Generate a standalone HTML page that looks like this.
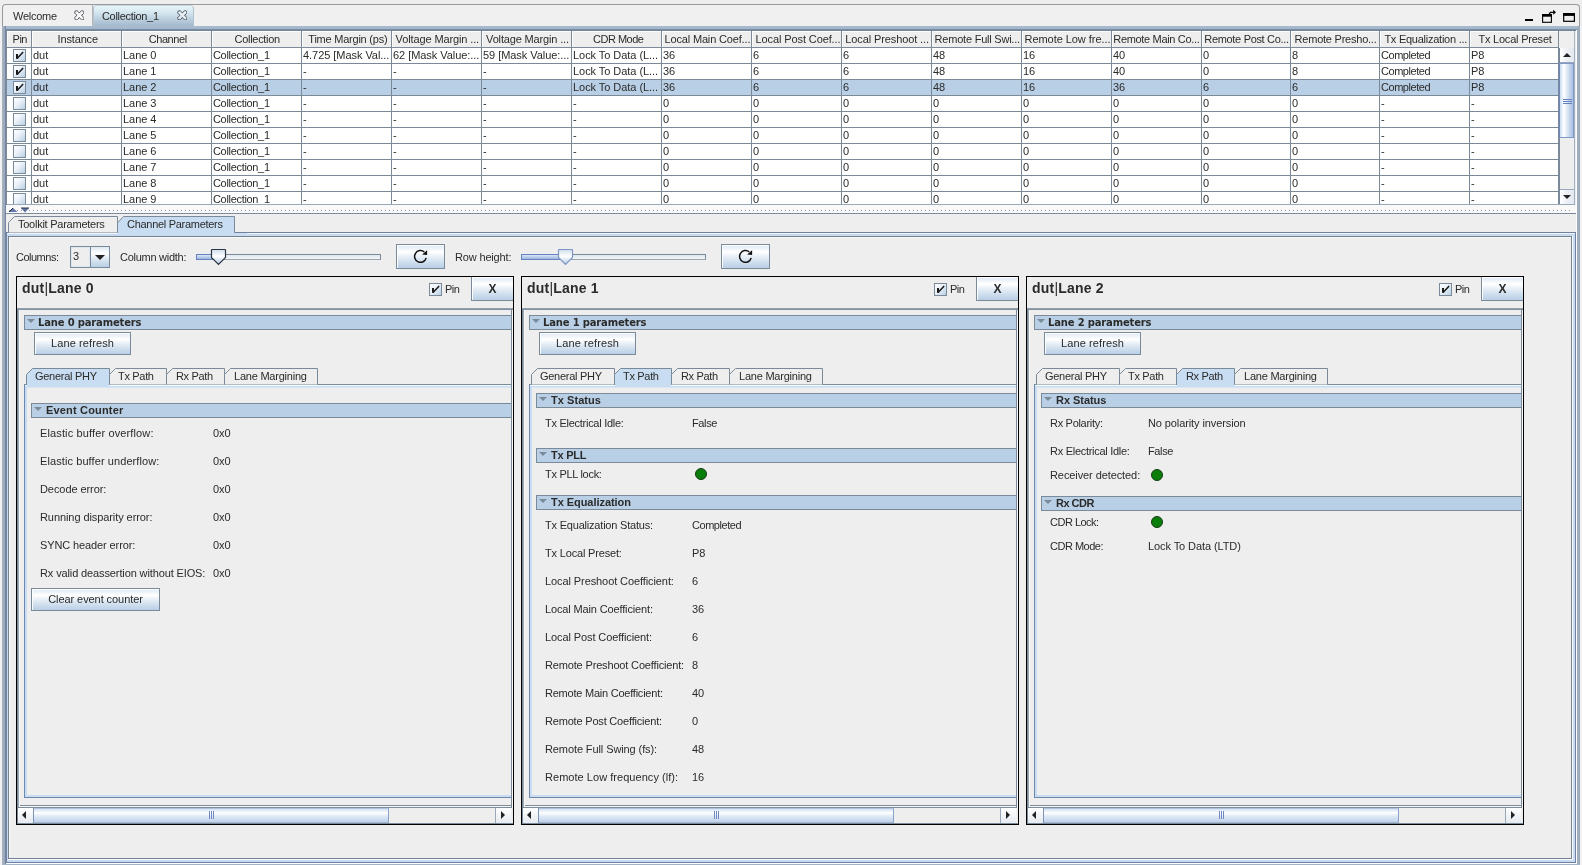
<!DOCTYPE html>
<html><head><meta charset="utf-8"><title>Collection_1</title><style>
*{box-sizing:border-box;margin:0;padding:0}
html,body{width:1582px;height:865px;overflow:hidden;background:#eee}
body{will-change:transform;position:relative;font-family:"Liberation Sans",sans-serif;font-size:11px;color:#2b2b2b;letter-spacing:-0.15px;line-height:13px}
.a{position:absolute}
.t{position:absolute;white-space:nowrap}
.b{font-weight:bold}
.btn{position:absolute;border:1px solid #7a8a99;box-shadow:inset 1px 1px 0 rgba(255,255,255,.9);background:linear-gradient(#dde8f3 0%,#fff 30%,#dde8f3 60%,#b8cfe5 100%);text-align:center;white-space:nowrap}
.hdr{letter-spacing:-0.05px;position:absolute;top:31px;height:16px;background:#eee;box-shadow:inset 1px 1px 0 #fdfdfd;border-right:1px solid #7a8a99;line-height:17px;white-space:nowrap;overflow:hidden}
.hdr.l{text-align:left;padding-left:3px}
.row{position:absolute;left:7px;width:1552px;height:16px;border-bottom:1px solid #7a8a99;background:#fff}
.row.sel{background:#b8cfe5}
.c{letter-spacing:-0.05px;position:absolute;top:0;height:15px;line-height:15px;border-right:1px solid #7a8a99;padding-left:1px;white-space:nowrap;overflow:hidden}
.cb{position:absolute;width:13px;height:13px;border:1px solid #7a8a99;background:linear-gradient(135deg,#fff 0%,#eaf1f8 45%,#b8cfe5 100%)}
.sec{position:absolute;height:15px;border:1px solid #7a8a99;border-right:0;background:#b8cfe5}
.sec i{position:absolute;left:2px;top:3px;width:0;height:0;border-left:4px solid transparent;border-right:4px solid transparent;border-top:4px solid #7a8a99}
.sec b{position:absolute;top:0;line-height:13px;white-space:nowrap;letter-spacing:0.15px}
.sec b.dv{font-family:"DejaVu Sans","Liberation Sans",sans-serif;font-size:10px;letter-spacing:-0.17px}
.led{position:absolute;width:12px;height:12px;border-radius:50%;background:#0b7d0b;border:1px solid #143d14}
.panel{position:absolute;top:276px;height:549px;border:1px solid #000}
</style></head><body>
<div class="a" style="left:2px;top:4px;width:1578px;height:22px;border:1px solid #9a9a9a;border-bottom:0;border-radius:4px 4px 0 0;background:#f0f0f0"></div>
<div class="a" style="left:92px;top:5px;width:1px;height:21px;background:#b4b4b4"></div>
<div class="t" style="left:13px;top:10px;letter-spacing:-0.25px;">Welcome</div>
<div class="a" style="left:93px;top:5px;width:101px;height:22px;border-radius:4px 4px 0 0;border:1px solid #b4c3d1;border-bottom:0;border-top-color:#c9d6df;background:linear-gradient(#e8f6fa 0%,#d2e4ed 35%,#b9cddc 65%,#a0b6cb 100%)"></div>
<div class="t" style="left:102px;top:10px;letter-spacing:-0.32px;">Collection_1</div>
<svg class="a" style="left:73.7px;top:9.6px" width="10.6" height="10.6" viewBox="0 0 12 12"><path d="M2.2 0.9 L3.3 0.9 Q4 0.9 4.4 1.5 L6 3.5 L7.6 1.5 Q8 0.9 8.7 0.9 L9.8 0.9 Q11.1 0.9 11.1 2.2 L11.1 3.3 Q11.1 4 10.5 4.4 L8.5 6 L10.5 7.6 Q11.1 8 11.1 8.7 L11.1 9.8 Q11.1 11.1 9.8 11.1 L8.7 11.1 Q8 11.1 7.6 10.5 L6 8.5 L4.4 10.5 Q4 11.1 3.3 11.1 L2.2 11.1 Q0.9 11.1 0.9 9.8 L0.9 8.7 Q0.9 8 1.5 7.6 L3.5 6 L1.5 4.4 Q0.9 4 0.9 3.3 L0.9 2.2 Q0.9 0.9 2.2 0.9 Z" fill="rgba(255,255,255,.45)" stroke="#3a4048" stroke-width="0.95"/></svg>
<svg class="a" style="left:176.6px;top:9.8px" width="10.6" height="10.6" viewBox="0 0 12 12"><path d="M2.2 0.9 L3.3 0.9 Q4 0.9 4.4 1.5 L6 3.5 L7.6 1.5 Q8 0.9 8.7 0.9 L9.8 0.9 Q11.1 0.9 11.1 2.2 L11.1 3.3 Q11.1 4 10.5 4.4 L8.5 6 L10.5 7.6 Q11.1 8 11.1 8.7 L11.1 9.8 Q11.1 11.1 9.8 11.1 L8.7 11.1 Q8 11.1 7.6 10.5 L6 8.5 L4.4 10.5 Q4 11.1 3.3 11.1 L2.2 11.1 Q0.9 11.1 0.9 9.8 L0.9 8.7 Q0.9 8 1.5 7.6 L3.5 6 L1.5 4.4 Q0.9 4 0.9 3.3 L0.9 2.2 Q0.9 0.9 2.2 0.9 Z" fill="rgba(255,255,255,.45)" stroke="#3a4048" stroke-width="0.95"/></svg>
<div class="a" style="left:1525px;top:19px;width:8px;height:2px;background:#000"></div>
<svg class="a" style="left:1541px;top:9px" width="18" height="16" viewBox="0 0 18 16"><rect x="1.6" y="5.6" width="8.8" height="7.7" fill="none" stroke="#000" stroke-width="1.1"/><rect x="1.1" y="5.1" width="9.8" height="2.6" fill="#000"/><path d="M8.1 5.3 L9.4 3.4 L12.4 3.4" fill="none" stroke="#000" stroke-width="1.3"/><path d="M12.2 0.8 L15 3.3 L12.2 5.8 Z" fill="#000"/></svg>
<svg class="a" style="left:1562px;top:12px" width="14" height="11" viewBox="0 0 14 11"><rect x="1.7" y="1.7" width="10.7" height="7.6" fill="none" stroke="#000" stroke-width="1.2"/><rect x="1.1" y="1.1" width="11.9" height="2.8" fill="#000"/></svg>
<div class="a" style="left:0;top:26px;width:1582px;height:839px;background:#f2f2f4"></div>
<div class="a" style="left:5px;top:26px;width:1572px;height:838px;background:#eee"></div>
<div class="a" style="left:2px;top:26px;width:1578px;height:5px;background:linear-gradient(#a9bbcf 0%,#a3b6cb 58%,#7b8da1 62%,#748699 100%)"></div>
<div class="a" style="left:2px;top:26px;width:3px;height:839px;background:linear-gradient(90deg,#a9b4c2,#9ba7b6)"></div>
<div class="a" style="left:5px;top:26px;width:1px;height:839px;background:#7585a3"></div>
<div class="a" style="left:6px;top:30px;width:1px;height:175px;background:#7a8a99"></div>
<div class="a" style="left:1576px;top:30px;width:1px;height:835px;background:#fafcfd"></div>
<div class="a" style="left:1577px;top:26px;width:3px;height:839px;background:linear-gradient(90deg,#a6b1be,#9ca8b6)"></div>
<div class="a" style="left:6px;top:863px;width:1571px;height:1px;background:#fafcfd"></div>
<div class="a" style="left:2px;top:864px;width:1578px;height:1px;background:#a3b2c4"></div>
<div class="a" style="left:7px;top:31px;width:1568px;height:173px;background:#eee"></div>
<div class="hdr" style="left:7px;width:25px"><span style="position:absolute;left:5.6px;top:0;letter-spacing:-0.50px">Pin</span></div>
<div class="hdr" style="left:32px;width:90px"><span style="position:absolute;left:25.6px;top:0;letter-spacing:-0.16px">Instance</span></div>
<div class="hdr" style="left:122px;width:90px"><span style="position:absolute;left:26.7px;top:0;letter-spacing:-0.43px">Channel</span></div>
<div class="hdr" style="left:212px;width:90px"><span style="position:absolute;left:22.6px;top:0;letter-spacing:-0.30px">Collection</span></div>
<div class="hdr" style="left:302px;width:90px"><span style="position:absolute;left:6.3px;top:0;letter-spacing:-0.23px">Time Margin (ps)</span></div>
<div class="hdr" style="left:392px;width:90px"><span style="position:absolute;left:3.6px;top:0;letter-spacing:-0.12px">Voltage Margin ...</span></div>
<div class="hdr" style="left:482px;width:90px"><span style="position:absolute;left:4.1px;top:0;letter-spacing:-0.16px">Voltage Margin ...</span></div>
<div class="hdr" style="left:572px;width:90px"><span style="position:absolute;left:21.0px;top:0;letter-spacing:-0.50px">CDR Mode</span></div>
<div class="hdr" style="left:662px;width:90px"><span style="position:absolute;left:2.5px;top:0;letter-spacing:-0.16px">Local Main Coef...</span></div>
<div class="hdr" style="left:752px;width:90px"><span style="position:absolute;left:3.6px;top:0;letter-spacing:-0.11px">Local Post Coef...</span></div>
<div class="hdr" style="left:842px;width:90px"><span style="position:absolute;left:3.3px;top:0;letter-spacing:-0.11px">Local Preshoot ...</span></div>
<div class="hdr" style="left:932px;width:90px"><span style="position:absolute;left:2.6px;top:0;letter-spacing:-0.22px">Remote Full Swi...</span></div>
<div class="hdr" style="left:1022px;width:90px"><span style="position:absolute;left:2.5px;top:0;letter-spacing:-0.05px">Remote Low fre...</span></div>
<div class="hdr" style="left:1112px;width:90px"><span style="position:absolute;left:1.3px;top:0;letter-spacing:-0.33px">Remote Main Co...</span></div>
<div class="hdr" style="left:1202px;width:89px"><span style="position:absolute;left:2.3px;top:0;letter-spacing:-0.32px">Remote Post Co...</span></div>
<div class="hdr" style="left:1291px;width:89px"><span style="position:absolute;left:3.6px;top:0;letter-spacing:-0.23px">Remote Presho...</span></div>
<div class="hdr" style="left:1380px;width:90px"><span style="position:absolute;left:4.4px;top:0;letter-spacing:-0.25px">Tx Equalization ...</span></div>
<div class="hdr" style="left:1470px;width:89px"><span style="position:absolute;left:8.4px;top:0;letter-spacing:-0.21px">Tx Local Preset</span></div>
<div class="a" style="left:7px;top:47px;width:1552px;height:1px;background:#7a8a99"></div>
<div class="a" style="left:1559px;top:31px;width:16px;height:17px;background:#efefef;border-right:1px solid #a9b5c3"></div>
<div class="a" style="left:0;top:48px;width:1582px;height:156px;overflow:hidden">
<div class="row" style="top:0px"><div class="c" style="left:0;width:25px"><div class="cb" style="left:6px;top:1px"><svg class="a" style="left:0;top:0" width="11" height="11" viewBox="0 0 11 11"><rect x="2" y="4" width="2" height="4.8" fill="#1a1a1a"/><path d="M3.5 8.1 L8.7 2.4" stroke="#1a1a1a" stroke-width="1.5" stroke-linecap="round" fill="none"/></svg></div></div><div class="c" style="left:25px;width:90px;">dut</div><div class="c" style="left:115px;width:90px;">Lane 0</div><div class="c" style="left:205px;width:90px;letter-spacing:-0.32px;">Collection_1</div><div class="c" style="left:295px;width:90px;">4.725 [Mask Val...</div><div class="c" style="left:385px;width:90px;">62 [Mask Value:...</div><div class="c" style="left:475px;width:90px;">59 [Mask Value:...</div><div class="c" style="left:565px;width:90px;">Lock To Data (L...</div><div class="c" style="left:655px;width:90px;">36</div><div class="c" style="left:745px;width:90px;">6</div><div class="c" style="left:835px;width:90px;">6</div><div class="c" style="left:925px;width:90px;">48</div><div class="c" style="left:1015px;width:90px;">16</div><div class="c" style="left:1105px;width:90px;">40</div><div class="c" style="left:1195px;width:89px;">0</div><div class="c" style="left:1284px;width:89px;">8</div><div class="c" style="left:1373px;width:90px;letter-spacing:-0.46px;">Completed</div><div class="c" style="left:1463px;width:89px;">P8</div></div>
<div class="row" style="top:16px"><div class="c" style="left:0;width:25px"><div class="cb" style="left:6px;top:1px"><svg class="a" style="left:0;top:0" width="11" height="11" viewBox="0 0 11 11"><rect x="2" y="4" width="2" height="4.8" fill="#1a1a1a"/><path d="M3.5 8.1 L8.7 2.4" stroke="#1a1a1a" stroke-width="1.5" stroke-linecap="round" fill="none"/></svg></div></div><div class="c" style="left:25px;width:90px;">dut</div><div class="c" style="left:115px;width:90px;">Lane 1</div><div class="c" style="left:205px;width:90px;letter-spacing:-0.32px;">Collection_1</div><div class="c" style="left:295px;width:90px;">-</div><div class="c" style="left:385px;width:90px;">-</div><div class="c" style="left:475px;width:90px;">-</div><div class="c" style="left:565px;width:90px;">Lock To Data (L...</div><div class="c" style="left:655px;width:90px;">36</div><div class="c" style="left:745px;width:90px;">6</div><div class="c" style="left:835px;width:90px;">6</div><div class="c" style="left:925px;width:90px;">48</div><div class="c" style="left:1015px;width:90px;">16</div><div class="c" style="left:1105px;width:90px;">40</div><div class="c" style="left:1195px;width:89px;">0</div><div class="c" style="left:1284px;width:89px;">8</div><div class="c" style="left:1373px;width:90px;letter-spacing:-0.46px;">Completed</div><div class="c" style="left:1463px;width:89px;">P8</div></div>
<div class="row sel" style="top:32px"><div class="c" style="left:0;width:25px"><div class="cb" style="left:6px;top:1px"><svg class="a" style="left:0;top:0" width="11" height="11" viewBox="0 0 11 11"><rect x="2" y="4" width="2" height="4.8" fill="#1a1a1a"/><path d="M3.5 8.1 L8.7 2.4" stroke="#1a1a1a" stroke-width="1.5" stroke-linecap="round" fill="none"/></svg></div></div><div class="c" style="left:25px;width:90px;">dut</div><div class="c" style="left:115px;width:90px;">Lane 2</div><div class="c" style="left:205px;width:90px;letter-spacing:-0.32px;">Collection_1</div><div class="c" style="left:295px;width:90px;">-</div><div class="c" style="left:385px;width:90px;">-</div><div class="c" style="left:475px;width:90px;">-</div><div class="c" style="left:565px;width:90px;">Lock To Data (L...</div><div class="c" style="left:655px;width:90px;">36</div><div class="c" style="left:745px;width:90px;">6</div><div class="c" style="left:835px;width:90px;">6</div><div class="c" style="left:925px;width:90px;">48</div><div class="c" style="left:1015px;width:90px;">16</div><div class="c" style="left:1105px;width:90px;">36</div><div class="c" style="left:1195px;width:89px;">6</div><div class="c" style="left:1284px;width:89px;">6</div><div class="c" style="left:1373px;width:90px;letter-spacing:-0.46px;">Completed</div><div class="c" style="left:1463px;width:89px;">P8</div></div>
<div class="row" style="top:48px"><div class="c" style="left:0;width:25px"><div class="cb" style="left:6px;top:1px"></div></div><div class="c" style="left:25px;width:90px;">dut</div><div class="c" style="left:115px;width:90px;">Lane 3</div><div class="c" style="left:205px;width:90px;letter-spacing:-0.32px;">Collection_1</div><div class="c" style="left:295px;width:90px;">-</div><div class="c" style="left:385px;width:90px;">-</div><div class="c" style="left:475px;width:90px;">-</div><div class="c" style="left:565px;width:90px;">-</div><div class="c" style="left:655px;width:90px;">0</div><div class="c" style="left:745px;width:90px;">0</div><div class="c" style="left:835px;width:90px;">0</div><div class="c" style="left:925px;width:90px;">0</div><div class="c" style="left:1015px;width:90px;">0</div><div class="c" style="left:1105px;width:90px;">0</div><div class="c" style="left:1195px;width:89px;">0</div><div class="c" style="left:1284px;width:89px;">0</div><div class="c" style="left:1373px;width:90px;">-</div><div class="c" style="left:1463px;width:89px;">-</div></div>
<div class="row" style="top:64px"><div class="c" style="left:0;width:25px"><div class="cb" style="left:6px;top:1px"></div></div><div class="c" style="left:25px;width:90px;">dut</div><div class="c" style="left:115px;width:90px;">Lane 4</div><div class="c" style="left:205px;width:90px;letter-spacing:-0.32px;">Collection_1</div><div class="c" style="left:295px;width:90px;">-</div><div class="c" style="left:385px;width:90px;">-</div><div class="c" style="left:475px;width:90px;">-</div><div class="c" style="left:565px;width:90px;">-</div><div class="c" style="left:655px;width:90px;">0</div><div class="c" style="left:745px;width:90px;">0</div><div class="c" style="left:835px;width:90px;">0</div><div class="c" style="left:925px;width:90px;">0</div><div class="c" style="left:1015px;width:90px;">0</div><div class="c" style="left:1105px;width:90px;">0</div><div class="c" style="left:1195px;width:89px;">0</div><div class="c" style="left:1284px;width:89px;">0</div><div class="c" style="left:1373px;width:90px;">-</div><div class="c" style="left:1463px;width:89px;">-</div></div>
<div class="row" style="top:80px"><div class="c" style="left:0;width:25px"><div class="cb" style="left:6px;top:1px"></div></div><div class="c" style="left:25px;width:90px;">dut</div><div class="c" style="left:115px;width:90px;">Lane 5</div><div class="c" style="left:205px;width:90px;letter-spacing:-0.32px;">Collection_1</div><div class="c" style="left:295px;width:90px;">-</div><div class="c" style="left:385px;width:90px;">-</div><div class="c" style="left:475px;width:90px;">-</div><div class="c" style="left:565px;width:90px;">-</div><div class="c" style="left:655px;width:90px;">0</div><div class="c" style="left:745px;width:90px;">0</div><div class="c" style="left:835px;width:90px;">0</div><div class="c" style="left:925px;width:90px;">0</div><div class="c" style="left:1015px;width:90px;">0</div><div class="c" style="left:1105px;width:90px;">0</div><div class="c" style="left:1195px;width:89px;">0</div><div class="c" style="left:1284px;width:89px;">0</div><div class="c" style="left:1373px;width:90px;">-</div><div class="c" style="left:1463px;width:89px;">-</div></div>
<div class="row" style="top:96px"><div class="c" style="left:0;width:25px"><div class="cb" style="left:6px;top:1px"></div></div><div class="c" style="left:25px;width:90px;">dut</div><div class="c" style="left:115px;width:90px;">Lane 6</div><div class="c" style="left:205px;width:90px;letter-spacing:-0.32px;">Collection_1</div><div class="c" style="left:295px;width:90px;">-</div><div class="c" style="left:385px;width:90px;">-</div><div class="c" style="left:475px;width:90px;">-</div><div class="c" style="left:565px;width:90px;">-</div><div class="c" style="left:655px;width:90px;">0</div><div class="c" style="left:745px;width:90px;">0</div><div class="c" style="left:835px;width:90px;">0</div><div class="c" style="left:925px;width:90px;">0</div><div class="c" style="left:1015px;width:90px;">0</div><div class="c" style="left:1105px;width:90px;">0</div><div class="c" style="left:1195px;width:89px;">0</div><div class="c" style="left:1284px;width:89px;">0</div><div class="c" style="left:1373px;width:90px;">-</div><div class="c" style="left:1463px;width:89px;">-</div></div>
<div class="row" style="top:112px"><div class="c" style="left:0;width:25px"><div class="cb" style="left:6px;top:1px"></div></div><div class="c" style="left:25px;width:90px;">dut</div><div class="c" style="left:115px;width:90px;">Lane 7</div><div class="c" style="left:205px;width:90px;letter-spacing:-0.32px;">Collection_1</div><div class="c" style="left:295px;width:90px;">-</div><div class="c" style="left:385px;width:90px;">-</div><div class="c" style="left:475px;width:90px;">-</div><div class="c" style="left:565px;width:90px;">-</div><div class="c" style="left:655px;width:90px;">0</div><div class="c" style="left:745px;width:90px;">0</div><div class="c" style="left:835px;width:90px;">0</div><div class="c" style="left:925px;width:90px;">0</div><div class="c" style="left:1015px;width:90px;">0</div><div class="c" style="left:1105px;width:90px;">0</div><div class="c" style="left:1195px;width:89px;">0</div><div class="c" style="left:1284px;width:89px;">0</div><div class="c" style="left:1373px;width:90px;">-</div><div class="c" style="left:1463px;width:89px;">-</div></div>
<div class="row" style="top:128px"><div class="c" style="left:0;width:25px"><div class="cb" style="left:6px;top:1px"></div></div><div class="c" style="left:25px;width:90px;">dut</div><div class="c" style="left:115px;width:90px;">Lane 8</div><div class="c" style="left:205px;width:90px;letter-spacing:-0.32px;">Collection_1</div><div class="c" style="left:295px;width:90px;">-</div><div class="c" style="left:385px;width:90px;">-</div><div class="c" style="left:475px;width:90px;">-</div><div class="c" style="left:565px;width:90px;">-</div><div class="c" style="left:655px;width:90px;">0</div><div class="c" style="left:745px;width:90px;">0</div><div class="c" style="left:835px;width:90px;">0</div><div class="c" style="left:925px;width:90px;">0</div><div class="c" style="left:1015px;width:90px;">0</div><div class="c" style="left:1105px;width:90px;">0</div><div class="c" style="left:1195px;width:89px;">0</div><div class="c" style="left:1284px;width:89px;">0</div><div class="c" style="left:1373px;width:90px;">-</div><div class="c" style="left:1463px;width:89px;">-</div></div>
<div class="row" style="top:144px"><div class="c" style="left:0;width:25px"><div class="cb" style="left:6px;top:1px"></div></div><div class="c" style="left:25px;width:90px;">dut</div><div class="c" style="left:115px;width:90px;">Lane 9</div><div class="c" style="left:205px;width:90px;letter-spacing:-0.32px;">Collection_1</div><div class="c" style="left:295px;width:90px;">-</div><div class="c" style="left:385px;width:90px;">-</div><div class="c" style="left:475px;width:90px;">-</div><div class="c" style="left:565px;width:90px;">-</div><div class="c" style="left:655px;width:90px;">0</div><div class="c" style="left:745px;width:90px;">0</div><div class="c" style="left:835px;width:90px;">0</div><div class="c" style="left:925px;width:90px;">0</div><div class="c" style="left:1015px;width:90px;">0</div><div class="c" style="left:1105px;width:90px;">0</div><div class="c" style="left:1195px;width:89px;">0</div><div class="c" style="left:1284px;width:89px;">0</div><div class="c" style="left:1373px;width:90px;">-</div><div class="c" style="left:1463px;width:89px;">-</div></div>
</div>
<div class="a" style="left:1559px;top:48px;width:16px;height:156px;background:#eee;border-left:1px solid #7a8a99;border-right:1px solid #9fb0c3"></div>
<div class="a" style="left:1560px;top:48px;width:14px;height:15px;background:linear-gradient(90deg,#fff,#eef2f7 40%,#e3e9f0);border-bottom:1px solid #9aa9ba"></div>
<div class="a" style="left:1563px;top:53px;width:0;height:0;border-left:4px solid transparent;border-right:4px solid transparent;border-bottom:4px solid #222"></div>
<div class="a" style="left:1559px;top:63px;width:15px;height:75px;border:1px solid #7f98c9;border-left-color:#6f83b5;background:linear-gradient(90deg,#c8ddf2 0%,#fff 30%,#dbe7f4 55%,#a9c0e0 100%)"></div>
<div class="a" style="left:1563px;top:99px;width:9px;height:1px;background:#6382bf"></div>
<div class="a" style="left:1563px;top:101px;width:9px;height:1px;background:#6382bf"></div>
<div class="a" style="left:1563px;top:103px;width:9px;height:1px;background:#6382bf"></div>
<div class="a" style="left:1560px;top:189px;width:14px;height:15px;background:linear-gradient(90deg,#fff,#eef2f7 40%,#e3e9f0);border-top:1px solid #9aa9ba"></div>
<div class="a" style="left:1563px;top:195px;width:0;height:0;border-left:4px solid transparent;border-right:4px solid transparent;border-top:4px solid #222"></div>
<div class="a" style="left:7px;top:204px;width:1568px;height:1px;background:#9aa9ba"></div>
<div class="a" style="left:6px;top:205px;width:1570px;height:8px;background:#f9f9f9"></div>
<svg class="a" style="left:7px;top:206px" width="1568" height="8"><defs><pattern id="dots" x="2" y="0" width="4" height="8" patternUnits="userSpaceOnUse"><rect x="0" y="4" width="1" height="1" fill="#8a98a8"/></pattern></defs><rect x="2" y="0" width="1564" height="8" fill="url(#dots)"/><path d="M2 6 L6 2 L10.5 6 Z" fill="#6575ad"/><path d="M2 6 L6 2" stroke="#1e2a3a" stroke-width="1" fill="none"/><path d="M14 2 L22 2 L18 6.5 Z" fill="#5f6f9e"/><path d="M14 2 L22 2" stroke="#2d3850" stroke-width="1" fill="none"/></svg>
<div class="a" style="left:6px;top:213px;width:1570px;height:650px;background:#eee"></div>
<div class="a" style="left:6px;top:213px;width:1570px;height:1px;background:#7a8a99"></div>
<div class="a" style="left:6px;top:232px;width:1570px;height:631px;border:1px solid #6f82a6;border-top-color:#70819f"></div>
<div class="a" style="left:7px;top:233px;width:1568px;height:629px;border:1px solid #c8daf0;border-top-width:3px;border-right-width:2px;border-bottom-width:2px"></div>
<div class="a" style="left:7px;top:233px;width:1568px;height:1px;background:#eef6fc"></div>
<div class="a" style="left:8px;top:236px;width:1565px;height:624px;background:#fafcfd"></div>
<div class="a" style="left:8px;top:236px;width:1564px;height:623px;border:1px solid #75828f;background:#eee;box-shadow:inset 1px 1px 0 #f8f8f8"></div>
<svg class="a" style="left:7px;top:215px" width="240" height="20" viewBox="0 0 240 20"><path d="M1.5 17.5 L1.5 7.5 L7.5 1.5 L110.5 1.5 L110.5 17.5" fill="#eee" stroke="#7a8a99"/><path d="M111 20 L111 7.5 L117 1.5 L227.5 1.5 L227.5 18 L240 18 L240 20 Z" fill="#c8ddf2" stroke="none"/><path d="M110.5 8 L116.5 1.5 L227.5 1.5 L227.5 17.5" fill="none" stroke="#7a8a99"/></svg>
<div class="t" style="left:18px;top:218px;letter-spacing:-0.25px;">Toolkit Parameters</div>
<div class="t" style="left:127px;top:218px;letter-spacing:-0.29px;">Channel Parameters</div>
<div class="t" style="left:16px;top:251px;letter-spacing:-0.50px;">Columns:</div>
<div class="a" style="left:70px;top:246px;width:40px;height:22px;border:1px solid #7a8a99;background:linear-gradient(#dde8f3 0%,#fff 30%,#dde8f3 60%,#b8cfe5 100%)"></div>
<div class="a" style="left:71px;top:247px;width:20px;height:20px;background:#eee;box-shadow:inset 0 0 0 1px #dde7f1;border-right:1px solid #7a8a99"></div>
<div class="t" style="left:73px;top:250px">3</div>
<div class="a" style="left:95px;top:255px;width:0;height:0;border-left:5px solid transparent;border-right:5px solid transparent;border-top:5px solid #222"></div>
<div class="t" style="left:120px;top:251px;letter-spacing:-0.27px;">Column width:</div>
<div class="t" style="left:455px;top:251px;letter-spacing:-0.16px;">Row height:</div>
<div class="a" style="left:196px;top:254px;width:185px;height:6px;border:1px solid #7a8a99;border-bottom-color:#9aa5b0;background:linear-gradient(#dfe6ee,#f4f6f9)"></div>
<div class="a" style="left:196px;top:254px;width:18px;height:6px;border:1px solid #6382bf;background:linear-gradient(#dbe6f6,#9db4dc)"></div>
<svg class="a" style="left:210px;top:248px" width="17" height="18" viewBox="0 0 17 18"><defs><linearGradient id="tg211" x1="0" y1="0" x2="0" y2="1"><stop offset="0" stop-color="#cfdceb"/><stop offset="0.45" stop-color="#ffffff"/><stop offset="1" stop-color="#b3c8e4"/></linearGradient></defs><path d="M2 1.5 L15 1.5 Q15.5 1.5 15.5 2 L15.5 9.5 L8.5 16.5 L1.5 9.5 L1.5 2 Q1.5 1.5 2 1.5 Z" fill="url(#tg211)" stroke="#2c3644" stroke-width="1.2"/></svg>
<div class="a" style="left:521px;top:254px;width:185px;height:6px;border:1px solid #7a8a99;border-bottom-color:#9aa5b0;background:linear-gradient(#dfe6ee,#f4f6f9)"></div>
<div class="a" style="left:521px;top:254px;width:40px;height:6px;border:1px solid #6382bf;background:linear-gradient(#dbe6f6,#9db4dc)"></div>
<svg class="a" style="left:557px;top:248px" width="17" height="18" viewBox="0 0 17 18"><defs><linearGradient id="tg558" x1="0" y1="0" x2="0" y2="1"><stop offset="0" stop-color="#cfdceb"/><stop offset="0.45" stop-color="#ffffff"/><stop offset="1" stop-color="#b3c8e4"/></linearGradient></defs><path d="M2 1.5 L15 1.5 Q15.5 1.5 15.5 2 L15.5 9.5 L8.5 16.5 L1.5 9.5 L1.5 2 Q1.5 1.5 2 1.5 Z" fill="url(#tg558)" stroke="#7d96c6" stroke-width="1.2"/></svg>
<div class="btn" style="left:396px;top:244px;width:49px;height:25px"></div>
<svg class="a" style="left:412px;top:248px" width="18" height="18" viewBox="0 0 18 18"><path d="M12.29 3.88 A5.9 5.9 0 1 0 14.2 9.93" fill="none" stroke="#111" stroke-width="1.5"/><path d="M15.1 2.2 L15.1 6.9 L10.1 6.5 Z" fill="#111"/></svg>
<div class="btn" style="left:721px;top:244px;width:49px;height:25px"></div>
<svg class="a" style="left:737px;top:248px" width="18" height="18" viewBox="0 0 18 18"><path d="M12.29 3.88 A5.9 5.9 0 1 0 14.2 9.93" fill="none" stroke="#111" stroke-width="1.5"/><path d="M15.1 2.2 L15.1 6.9 L10.1 6.5 Z" fill="#111"/></svg>
<div class="panel" style="left:16px;width:498px"></div>
<div class="t b" style="left:22px;top:280px;font-size:14px;line-height:16px;letter-spacing:0.2px">dut<span style="font-weight:normal">|</span>Lane 0</div>
<div class="cb" style="left:429px;top:283px;width:13px;height:13px"><svg class="a" style="left:0;top:0" width="11" height="11" viewBox="0 0 11 11"><rect x="2" y="4" width="2" height="4.8" fill="#1a1a1a"/><path d="M3.5 8.1 L8.7 2.4" stroke="#1a1a1a" stroke-width="1.5" stroke-linecap="round" fill="none"/></svg></div>
<div class="t" style="left:445px;top:283px;letter-spacing:-0.50px;">Pin</div>
<div class="btn b" style="left:471px;top:277px;width:42px;height:24px;line-height:24px;font-size:12px;letter-spacing:0;border-right:0;border-top:0">X</div>
<div class="a" style="left:17px;top:308px;width:496px;height:2px;background:linear-gradient(#9aa7b4,#7a8a99)"></div>
<div class="a" style="left:17px;top:310px;width:3px;height:514px;background:linear-gradient(90deg,#7a8a99 0,#7a8a99 33%,#9aa7b4 33%,#9aa7b4 66%,#f8f8f8 66%)"></div>
<div class="a" style="left:511px;top:310px;width:2px;height:498px;background:linear-gradient(90deg,#7a8a99 50%,#f8f8f8 50%)"></div>
<div class="a" style="left:20px;top:805px;width:491px;height:2px;background:linear-gradient(#7a8a99 50%,#f8f8f8 50%)"></div>
<div class="a" style="left:18px;top:807px;width:494px;height:1px;background:#7a8a99"></div>
<div class="a" style="left:17px;top:823px;width:496px;height:1px;background:#7a8a99"></div>
<div class="sec" style="left:24px;top:315px;width:487px"><i></i><b class="dv" style="left:13px">Lane 0 parameters</b></div>
<div class="btn" style="left:34px;top:332px;width:97px;height:23px;line-height:21px;letter-spacing:0.10px;">Lane refresh</div>
<div class="a" style="left:24px;top:384px;width:487px;height:414px;border:1px solid #6f86ad;border-right:0;border-top-color:#7a8a99"></div>
<div class="a" style="left:25px;top:385px;width:486px;height:412px;border:2px solid #c8ddf2;border-right:0;border-top-width:3px"></div>
<div class="a" style="left:25px;top:385px;width:486px;height:1px;background:#f3fbfe"></div>
<div class="a" style="left:27px;top:387px;width:484px;height:1px;background:#dbe6f4"></div>
<svg class="a" style="left:0;top:366px" width="1582" height="22" viewBox="0 366 1582 22"><path d="M27.0 387 L26.5 374.5 L32.5 368.5 L109.5 368.5 L109.0 387 Z" fill="#c8ddf2" stroke="none"/><path d="M26.5 385 L26.5 374.5 L32.5 368.5 L109.5 368.5 L109.5 384.5" fill="none" stroke="#7a8a99"/><path d="M109.5 384.5 L109.5 374.5 L115.5 368.5 L166.5 368.5 L166.5 384.5" fill="#eee" stroke="#7a8a99"/><path d="M166.5 384.5 L166.5 374.5 L172.5 368.5 L224.5 368.5 L224.5 384.5" fill="#eee" stroke="#7a8a99"/><path d="M224.5 384.5 L224.5 374.5 L230.5 368.5 L317.5 368.5 L317.5 384.5" fill="#eee" stroke="#7a8a99"/></svg><div class="t" style="left:35px;top:370px;letter-spacing:-0.28px;">General PHY</div><div class="t" style="left:118px;top:370px;letter-spacing:-0.32px;">Tx Path</div><div class="t" style="left:176px;top:370px;letter-spacing:-0.35px;">Rx Path</div><div class="t" style="left:234px;top:370px;letter-spacing:-0.22px;">Lane Margining</div>
<div class="a" style="left:18px;top:808px;width:493px;height:15px;background:#eee"></div>
<div class="a" style="left:18px;top:808px;width:16px;height:15px;background:linear-gradient(#fff,#f4f6f9 40%,#e6ebf1);border-right:1px solid #7f93b5"></div>
<div class="a" style="left:22px;top:811px;width:0;height:0;border-top:4px solid transparent;border-bottom:4px solid transparent;border-right:4px solid #222"></div>
<div class="a" style="left:34px;top:808px;width:355px;height:15px;border:1px solid #8aa1cc;border-left:0;border-top-color:#b3c3dc;border-bottom-color:#a3b6d6;background:linear-gradient(#d2e1f2 0%,#fff 30%,#e0eaf6 55%,#c0d2ea 100%)"></div>
<div class="a" style="left:209px;top:811px;width:1px;height:8px;background:#6f8ac4"></div>
<div class="a" style="left:211px;top:811px;width:1px;height:8px;background:#6f8ac4"></div>
<div class="a" style="left:213px;top:811px;width:1px;height:8px;background:#6f8ac4"></div>
<div class="a" style="left:495px;top:808px;width:16px;height:15px;background:linear-gradient(#fff,#f4f6f9 40%,#e6ebf1);border-left:1px solid #9aa9ba"></div>
<div class="a" style="left:501px;top:811px;width:0;height:0;border-top:4px solid transparent;border-bottom:4px solid transparent;border-left:4px solid #222"></div>
<div class="sec" style="left:31px;top:403px;width:480px"><i></i><b style="left:14px;top:0;letter-spacing:0.17px;">Event Counter</b></div>
<div class="t" style="left:40px;top:427px;letter-spacing:0.13px;">Elastic buffer overflow:</div>
<div class="t" style="left:213px;top:427px;letter-spacing:0.00px;">0x0</div>
<div class="t" style="left:40px;top:455px;letter-spacing:0.09px;">Elastic buffer underflow:</div>
<div class="t" style="left:213px;top:455px;letter-spacing:0.00px;">0x0</div>
<div class="t" style="left:40px;top:483px;letter-spacing:-0.07px;">Decode error:</div>
<div class="t" style="left:213px;top:483px;letter-spacing:0.00px;">0x0</div>
<div class="t" style="left:40px;top:511px;letter-spacing:-0.08px;">Running disparity error:</div>
<div class="t" style="left:213px;top:511px;letter-spacing:0.00px;">0x0</div>
<div class="t" style="left:40px;top:539px;letter-spacing:-0.11px;">SYNC header error:</div>
<div class="t" style="left:213px;top:539px;letter-spacing:0.00px;">0x0</div>
<div class="t" style="left:40px;top:567px;letter-spacing:-0.12px;">Rx valid deassertion without EIOS:</div>
<div class="t" style="left:213px;top:567px;letter-spacing:0.00px;">0x0</div>
<div class="btn" style="left:31px;top:588px;width:129px;height:23px;line-height:21px;letter-spacing:-0.07px;">Clear event counter</div>
<div class="panel" style="left:521px;width:498px"></div>
<div class="t b" style="left:527px;top:280px;font-size:14px;line-height:16px;letter-spacing:0.2px">dut<span style="font-weight:normal">|</span>Lane 1</div>
<div class="cb" style="left:934px;top:283px;width:13px;height:13px"><svg class="a" style="left:0;top:0" width="11" height="11" viewBox="0 0 11 11"><rect x="2" y="4" width="2" height="4.8" fill="#1a1a1a"/><path d="M3.5 8.1 L8.7 2.4" stroke="#1a1a1a" stroke-width="1.5" stroke-linecap="round" fill="none"/></svg></div>
<div class="t" style="left:950px;top:283px;letter-spacing:-0.50px;">Pin</div>
<div class="btn b" style="left:976px;top:277px;width:42px;height:24px;line-height:24px;font-size:12px;letter-spacing:0;border-right:0;border-top:0">X</div>
<div class="a" style="left:522px;top:308px;width:496px;height:2px;background:linear-gradient(#9aa7b4,#7a8a99)"></div>
<div class="a" style="left:522px;top:310px;width:3px;height:514px;background:linear-gradient(90deg,#7a8a99 0,#7a8a99 33%,#9aa7b4 33%,#9aa7b4 66%,#f8f8f8 66%)"></div>
<div class="a" style="left:1016px;top:310px;width:2px;height:498px;background:linear-gradient(90deg,#7a8a99 50%,#f8f8f8 50%)"></div>
<div class="a" style="left:525px;top:805px;width:491px;height:2px;background:linear-gradient(#7a8a99 50%,#f8f8f8 50%)"></div>
<div class="a" style="left:523px;top:807px;width:494px;height:1px;background:#7a8a99"></div>
<div class="a" style="left:522px;top:823px;width:496px;height:1px;background:#7a8a99"></div>
<div class="sec" style="left:529px;top:315px;width:487px"><i></i><b class="dv" style="left:13px">Lane 1 parameters</b></div>
<div class="btn" style="left:539px;top:332px;width:97px;height:23px;line-height:21px;letter-spacing:0.10px;">Lane refresh</div>
<div class="a" style="left:529px;top:384px;width:487px;height:414px;border:1px solid #6f86ad;border-right:0;border-top-color:#7a8a99"></div>
<div class="a" style="left:530px;top:385px;width:486px;height:412px;border:2px solid #c8ddf2;border-right:0;border-top-width:3px"></div>
<div class="a" style="left:530px;top:385px;width:486px;height:1px;background:#f3fbfe"></div>
<div class="a" style="left:532px;top:387px;width:484px;height:1px;background:#dbe6f4"></div>
<svg class="a" style="left:0;top:366px" width="1582" height="22" viewBox="0 366 1582 22"><path d="M531.5 384.5 L531.5 374.5 L537.5 368.5 L614.5 368.5 L614.5 384.5" fill="#eee" stroke="#7a8a99"/><path d="M615.0 387 L614.5 374.5 L620.5 368.5 L671.5 368.5 L671.0 387 Z" fill="#c8ddf2" stroke="none"/><path d="M614.5 385 L614.5 374.5 L620.5 368.5 L671.5 368.5 L671.5 384.5" fill="none" stroke="#7a8a99"/><path d="M671.5 384.5 L671.5 374.5 L677.5 368.5 L729.5 368.5 L729.5 384.5" fill="#eee" stroke="#7a8a99"/><path d="M729.5 384.5 L729.5 374.5 L735.5 368.5 L822.5 368.5 L822.5 384.5" fill="#eee" stroke="#7a8a99"/></svg><div class="t" style="left:540px;top:370px;letter-spacing:-0.28px;">General PHY</div><div class="t" style="left:623px;top:370px;letter-spacing:-0.32px;">Tx Path</div><div class="t" style="left:681px;top:370px;letter-spacing:-0.35px;">Rx Path</div><div class="t" style="left:739px;top:370px;letter-spacing:-0.22px;">Lane Margining</div>
<div class="a" style="left:523px;top:808px;width:493px;height:15px;background:#eee"></div>
<div class="a" style="left:523px;top:808px;width:16px;height:15px;background:linear-gradient(#fff,#f4f6f9 40%,#e6ebf1);border-right:1px solid #7f93b5"></div>
<div class="a" style="left:527px;top:811px;width:0;height:0;border-top:4px solid transparent;border-bottom:4px solid transparent;border-right:4px solid #222"></div>
<div class="a" style="left:539px;top:808px;width:355px;height:15px;border:1px solid #8aa1cc;border-left:0;border-top-color:#b3c3dc;border-bottom-color:#a3b6d6;background:linear-gradient(#d2e1f2 0%,#fff 30%,#e0eaf6 55%,#c0d2ea 100%)"></div>
<div class="a" style="left:714px;top:811px;width:1px;height:8px;background:#6f8ac4"></div>
<div class="a" style="left:716px;top:811px;width:1px;height:8px;background:#6f8ac4"></div>
<div class="a" style="left:718px;top:811px;width:1px;height:8px;background:#6f8ac4"></div>
<div class="a" style="left:1000px;top:808px;width:16px;height:15px;background:linear-gradient(#fff,#f4f6f9 40%,#e6ebf1);border-left:1px solid #9aa9ba"></div>
<div class="a" style="left:1006px;top:811px;width:0;height:0;border-top:4px solid transparent;border-bottom:4px solid transparent;border-left:4px solid #222"></div>
<div class="sec" style="left:536px;top:393px;width:480px"><i></i><b style="left:14px;top:0;letter-spacing:0.06px;">Tx Status</b></div>
<div class="t" style="left:545px;top:417px;letter-spacing:-0.27px;">Tx Electrical Idle:</div>
<div class="t" style="left:692px;top:417px;letter-spacing:-0.38px;">False</div>
<div class="sec" style="left:536px;top:448px;width:480px"><i></i><b style="left:14px;top:0;letter-spacing:-0.24px;">Tx PLL</b></div>
<div class="t" style="left:545px;top:468px;letter-spacing:-0.29px;">Tx PLL lock:</div>
<div class="led" style="left:695px;top:468px"></div>
<div class="sec" style="left:536px;top:495px;width:480px"><i></i><b style="left:14px;top:0;letter-spacing:-0.05px;">Tx Equalization</b></div>
<div class="t" style="left:545px;top:519px;letter-spacing:-0.20px;">Tx Equalization Status:</div>
<div class="t" style="left:692px;top:519px;letter-spacing:-0.46px;">Completed</div>
<div class="t" style="left:545px;top:547px;letter-spacing:-0.17px;">Tx Local Preset:</div>
<div class="t" style="left:692px;top:547px;">P8</div>
<div class="t" style="left:545px;top:575px;letter-spacing:-0.09px;">Local Preshoot Coefficient:</div>
<div class="t" style="left:692px;top:575px;">6</div>
<div class="t" style="left:545px;top:603px;letter-spacing:-0.14px;">Local Main Coefficient:</div>
<div class="t" style="left:692px;top:603px;">36</div>
<div class="t" style="left:545px;top:631px;letter-spacing:-0.10px;">Local Post Coefficient:</div>
<div class="t" style="left:692px;top:631px;">6</div>
<div class="t" style="left:545px;top:659px;letter-spacing:-0.16px;">Remote Preshoot Coefficient:</div>
<div class="t" style="left:692px;top:659px;">8</div>
<div class="t" style="left:545px;top:687px;letter-spacing:-0.23px;">Remote Main Coefficient:</div>
<div class="t" style="left:692px;top:687px;">40</div>
<div class="t" style="left:545px;top:715px;letter-spacing:-0.19px;">Remote Post Coefficient:</div>
<div class="t" style="left:692px;top:715px;">0</div>
<div class="t" style="left:545px;top:743px;letter-spacing:-0.10px;">Remote Full Swing (fs):</div>
<div class="t" style="left:692px;top:743px;">48</div>
<div class="t" style="left:545px;top:771px;letter-spacing:0.04px;">Remote Low frequency (lf):</div>
<div class="t" style="left:692px;top:771px;">16</div>
<div class="panel" style="left:1026px;width:498px"></div>
<div class="t b" style="left:1032px;top:280px;font-size:14px;line-height:16px;letter-spacing:0.2px">dut<span style="font-weight:normal">|</span>Lane 2</div>
<div class="cb" style="left:1439px;top:283px;width:13px;height:13px"><svg class="a" style="left:0;top:0" width="11" height="11" viewBox="0 0 11 11"><rect x="2" y="4" width="2" height="4.8" fill="#1a1a1a"/><path d="M3.5 8.1 L8.7 2.4" stroke="#1a1a1a" stroke-width="1.5" stroke-linecap="round" fill="none"/></svg></div>
<div class="t" style="left:1455px;top:283px;letter-spacing:-0.50px;">Pin</div>
<div class="btn b" style="left:1481px;top:277px;width:42px;height:24px;line-height:24px;font-size:12px;letter-spacing:0;border-right:0;border-top:0">X</div>
<div class="a" style="left:1027px;top:308px;width:496px;height:2px;background:linear-gradient(#9aa7b4,#7a8a99)"></div>
<div class="a" style="left:1027px;top:310px;width:3px;height:514px;background:linear-gradient(90deg,#7a8a99 0,#7a8a99 33%,#9aa7b4 33%,#9aa7b4 66%,#f8f8f8 66%)"></div>
<div class="a" style="left:1521px;top:310px;width:2px;height:498px;background:linear-gradient(90deg,#7a8a99 50%,#f8f8f8 50%)"></div>
<div class="a" style="left:1030px;top:805px;width:491px;height:2px;background:linear-gradient(#7a8a99 50%,#f8f8f8 50%)"></div>
<div class="a" style="left:1028px;top:807px;width:494px;height:1px;background:#7a8a99"></div>
<div class="a" style="left:1027px;top:823px;width:496px;height:1px;background:#7a8a99"></div>
<div class="sec" style="left:1034px;top:315px;width:487px"><i></i><b class="dv" style="left:13px">Lane 2 parameters</b></div>
<div class="btn" style="left:1044px;top:332px;width:97px;height:23px;line-height:21px;letter-spacing:0.10px;">Lane refresh</div>
<div class="a" style="left:1034px;top:384px;width:487px;height:414px;border:1px solid #6f86ad;border-right:0;border-top-color:#7a8a99"></div>
<div class="a" style="left:1035px;top:385px;width:486px;height:412px;border:2px solid #c8ddf2;border-right:0;border-top-width:3px"></div>
<div class="a" style="left:1035px;top:385px;width:486px;height:1px;background:#f3fbfe"></div>
<div class="a" style="left:1037px;top:387px;width:484px;height:1px;background:#dbe6f4"></div>
<svg class="a" style="left:0;top:366px" width="1582" height="22" viewBox="0 366 1582 22"><path d="M1036.5 384.5 L1036.5 374.5 L1042.5 368.5 L1119.5 368.5 L1119.5 384.5" fill="#eee" stroke="#7a8a99"/><path d="M1119.5 384.5 L1119.5 374.5 L1125.5 368.5 L1176.5 368.5 L1176.5 384.5" fill="#eee" stroke="#7a8a99"/><path d="M1177.0 387 L1176.5 374.5 L1182.5 368.5 L1234.5 368.5 L1234.0 387 Z" fill="#c8ddf2" stroke="none"/><path d="M1176.5 385 L1176.5 374.5 L1182.5 368.5 L1234.5 368.5 L1234.5 384.5" fill="none" stroke="#7a8a99"/><path d="M1234.5 384.5 L1234.5 374.5 L1240.5 368.5 L1327.5 368.5 L1327.5 384.5" fill="#eee" stroke="#7a8a99"/></svg><div class="t" style="left:1045px;top:370px;letter-spacing:-0.28px;">General PHY</div><div class="t" style="left:1128px;top:370px;letter-spacing:-0.32px;">Tx Path</div><div class="t" style="left:1186px;top:370px;letter-spacing:-0.35px;">Rx Path</div><div class="t" style="left:1244px;top:370px;letter-spacing:-0.22px;">Lane Margining</div>
<div class="a" style="left:1028px;top:808px;width:493px;height:15px;background:#eee"></div>
<div class="a" style="left:1028px;top:808px;width:16px;height:15px;background:linear-gradient(#fff,#f4f6f9 40%,#e6ebf1);border-right:1px solid #7f93b5"></div>
<div class="a" style="left:1032px;top:811px;width:0;height:0;border-top:4px solid transparent;border-bottom:4px solid transparent;border-right:4px solid #222"></div>
<div class="a" style="left:1044px;top:808px;width:355px;height:15px;border:1px solid #8aa1cc;border-left:0;border-top-color:#b3c3dc;border-bottom-color:#a3b6d6;background:linear-gradient(#d2e1f2 0%,#fff 30%,#e0eaf6 55%,#c0d2ea 100%)"></div>
<div class="a" style="left:1219px;top:811px;width:1px;height:8px;background:#6f8ac4"></div>
<div class="a" style="left:1221px;top:811px;width:1px;height:8px;background:#6f8ac4"></div>
<div class="a" style="left:1223px;top:811px;width:1px;height:8px;background:#6f8ac4"></div>
<div class="a" style="left:1505px;top:808px;width:16px;height:15px;background:linear-gradient(#fff,#f4f6f9 40%,#e6ebf1);border-left:1px solid #9aa9ba"></div>
<div class="a" style="left:1511px;top:811px;width:0;height:0;border-top:4px solid transparent;border-bottom:4px solid transparent;border-left:4px solid #222"></div>
<div class="sec" style="left:1041px;top:393px;width:480px"><i></i><b style="left:14px;top:0;letter-spacing:-0.04px;">Rx Status</b></div>
<div class="t" style="left:1050px;top:417px;letter-spacing:-0.30px;">Rx Polarity:</div>
<div class="t" style="left:1148px;top:417px;letter-spacing:-0.10px;">No polarity inversion</div>
<div class="t" style="left:1050px;top:445px;letter-spacing:-0.28px;">Rx Electrical Idle:</div>
<div class="t" style="left:1148px;top:445px;letter-spacing:-0.38px;">False</div>
<div class="t" style="left:1050px;top:469px;letter-spacing:-0.09px;">Receiver detected:</div>
<div class="led" style="left:1151px;top:469px"></div>
<div class="sec" style="left:1041px;top:496px;width:480px"><i></i><b style="left:14px;top:0;letter-spacing:-0.50px;">Rx CDR</b></div>
<div class="t" style="left:1050px;top:516px;letter-spacing:-0.50px;">CDR Lock:</div>
<div class="led" style="left:1151px;top:516px"></div>
<div class="t" style="left:1050px;top:540px;letter-spacing:-0.50px;">CDR Mode:</div>
<div class="t" style="left:1148px;top:540px;letter-spacing:-0.09px;">Lock To Data (LTD)</div>
</body></html>
